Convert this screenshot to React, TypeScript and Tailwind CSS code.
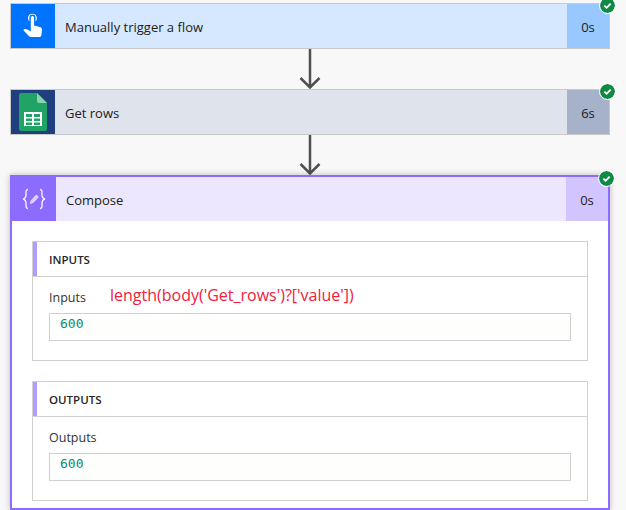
import React from 'react';

const CheckBadge = () => (
  <div className="absolute -top-[6px] -right-[6px] flex h-[15px] w-[15px] items-center justify-center rounded-full bg-[#0f8a45] outline outline-1 outline-white">
    <svg width="9" height="9" viewBox="0 0 10 10" fill="none">
      <path d="M1.5 5.2 4 7.5 8.5 2.8" stroke="white" strokeWidth="2" />
    </svg>
  </div>
);

const TouchIcon = () => (
  <svg width="20" height="27" viewBox="0 0 22 28" fill="white">
    <path d="M7 4.200a3.400 3.400 0 0 1 6.800 0v4.400a5.400 5.400 0 0 0 1.400-4.400A4.900 4.900 0 0 0 5.500 4.200c0 1.700.5 3.300 1.500 4.400z" />
    <path d="M8.600 4.300a1.800 1.800 0 0 1 3.600 0v8.700l6.300 1.500c1.500.4 2.500 1.400 2.500 2.900l-.8 6.100c-.2 1.200-1 2-2.200 2H8.600c-.8 0-1.400-.3-1.900-.9L.7 18.500c-.6-.7.2-2 1.300-1.800l3 .7 3.600 2z" />
  </svg>
);

const SheetIcon = () => (
  <svg width="28" height="38" viewBox="0 0 28 38">
    <path d="M2 0h16l10 10v26a2 2 0 0 1-2 2H2a2 2 0 0 1-2-2V2a2 2 0 0 1 2-2z" fill="#21a366" />
    <path d="M18 0l10 10h-8a2 2 0 0 1-2-2z" fill="#8ed1b1" />
    <path d="M5 19h18v14H5z" fill="white" />
    <path d="M7 21h6v3H7zM15 21h6v3h-6zM7 25.500h6v2.500H7zM15 25.500h6v2.500h-6zM7 29.500h6V32H7zM15 29.500h6V32h-6z" fill="#21a366" />
  </svg>
);

const ComposeIcon = () => (
  <svg width="24" height="22" viewBox="0 0 24 22" fill="none" stroke="#f4f0ff" strokeWidth="1.400">
    <path d="M6 1.500C3.500 1.500 4 4 4 6.500 4 9 3.500 10.500 1 11c2.500.5 3 2 3 4.500s-.5 5 2 5" />
    <path d="M18 1.500c2.500 0 2 2.500 2 5s.5 4 3 4.500c-2.500.5-3 2-3 4.500s.5 5-2 5" />
    <path d="M8.500 15.500l.8-3 5-5.500 2 1.900-5 5.500z" fill="#d8ceff" strokeWidth="0.800" />
  </svg>
);

const Arrow = () => (
  <div className="flex h-10 justify-center">
    <svg width="22" height="40" viewBox="0 0 22 40" fill="none" stroke="#505050" strokeWidth="2.500">
      <path d="M11 0v38.500M1.500 29l9.500 9.500 9.500-9.500" />
    </svg>
  </div>
);

type StepProps = {
  icon: React.ReactNode;
  title: string;
  duration: string;
  iconBg: string;
  titleBg: string;
  durationBg: string;
};

const Step = ({ icon, title, duration, iconBg, titleBg, durationBg }: StepProps) => (
  <div className="relative flex h-[46px] border border-[#c8c8c8]">
    <div className={`flex w-11 items-center justify-center ${iconBg}`}>{icon}</div>
    <div className={`flex flex-1 items-center pt-1 pl-[10px] text-[13px] text-[#212121] ${titleBg}`}>{title}</div>
    <div className={`flex w-[42px] items-center justify-center pt-1 text-[13px] text-[#212121] ${durationBg}`}>{duration}</div>
    <CheckBadge />
  </div>
);

const Section = ({ heading, label, value, note }: { heading: string; label: string; value: string; note?: string }) => (
  <div className="h-[120px] border border-[#d0d0d0] bg-white">
    <div className="flex h-[35px] items-center border-b border-[#d0d0d0]">
      <div className="h-full w-1 bg-[#b09cff]" />
      <span className="pt-[2px] pl-3 text-[11.500px] font-semibold text-[#252525]">{heading}</span>
    </div>
    <div className="px-4 pt-3">
      <div className="flex h-[24px] items-start">
        <span className="w-[61px] text-[12.500px] text-[#333333]">{label}</span>
        {note && <span className="-mt-[6px] text-[16px] text-[#f0203c]">{note}</span>}
      </div>
      <div className="flex h-7 items-center border border-[#d0d0d0] bg-[#fefefc] pb-[7px] pl-[10px] font-['DejaVu_Sans_Mono',monospace] text-[13px] text-[#0a8a72]">
        {value}
      </div>
    </div>
  </div>
);

export default function App() {
  return (
    <div className="h-[510px] overflow-hidden bg-[#f8f8f8] pt-[3px] pr-4 pl-[10px] font-['Open_Sans',sans-serif]">
      <Step icon={<TouchIcon />} title="Manually trigger a flow" duration="0s" iconBg="bg-[#0073ff]" titleBg="bg-[#d6e8ff]" durationBg="bg-[#99c7ff]" />
      <Arrow />
      <Step icon={<SheetIcon />} title="Get rows" duration="6s" iconBg="bg-[#1f3f7f]" titleBg="bg-[#dfe3eb]" durationBg="bg-[#a5b2c9]" />
      <Arrow />
      <div className="relative h-[335px] border-2 border-[#8c6cff] bg-white shadow-[0_0_6px_rgba(0,0,0,0.25)]">
        <div className="flex h-11">
          <div className="flex w-11 items-center justify-center bg-[#8c6cff]"><ComposeIcon /></div>
          <div className="flex flex-1 items-center bg-[#ede6ff] pt-1 pl-[10px] text-[13px] text-[#212121]">Compose</div>
          <div className="flex w-[42px] items-center justify-center bg-[#d1c4ff] pt-1 text-[13px] text-[#212121]">0s</div>
        </div>
        <div className="flex flex-col gap-5 px-5 pt-5">
          <Section heading="INPUTS" label="Inputs" value="600" note="length(body('Get_rows')?['value'])" />
          <Section heading="OUTPUTS" label="Outputs" value="600" />
        </div>
        <CheckBadge />
      </div>
    </div>
  );
}
